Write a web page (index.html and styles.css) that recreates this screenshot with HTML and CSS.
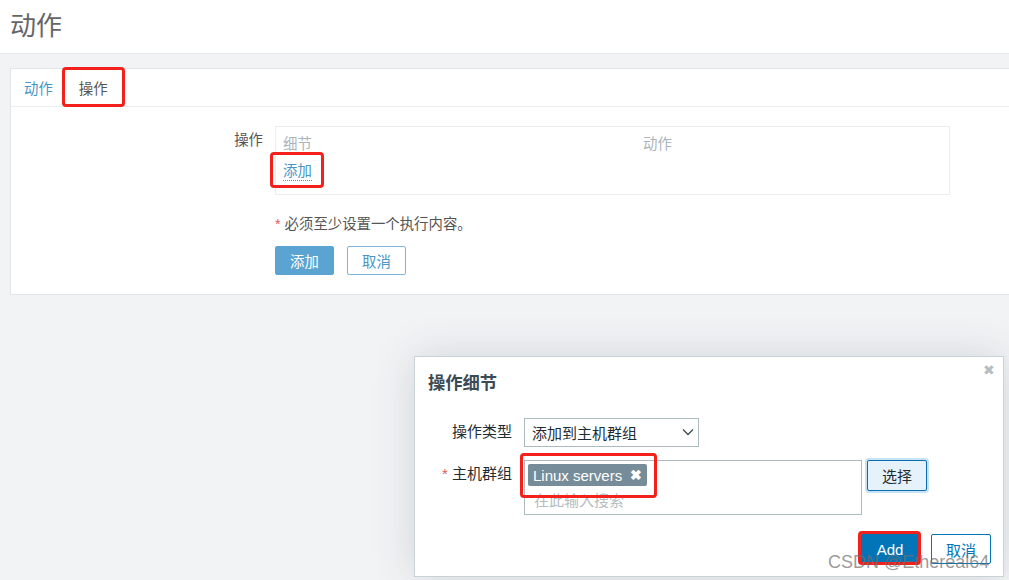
FILE: index.html
```html
<!DOCTYPE html>
<html lang="zh">
<head>
<meta charset="utf-8">
<title>动作</title>
<link rel="stylesheet" href="styles.css">
</head>
<body>
<header class="page-header">
  <h1 class="page-title">动作</h1>
</header>
<main class="page-main">
  <section class="card">
    <nav class="tabs">
      <a class="tab">动作</a>
      <a class="tab tab-active hl hl-tab">操作</a>
    </nav>
    <div class="form">
      <div class="form-row">
        <div class="form-label">操作</div>
        <div class="form-field">
          <div class="ops-table">
            <div class="ops-head">
              <span class="col-detail">细节</span>
              <span class="col-action">动作</span>
            </div>
            <div class="ops-body">
              <a class="link-add hl hl-link">添加</a>
            </div>
          </div>
        </div>
      </div>
      <div class="form-row">
        <div class="form-label"></div>
        <div class="form-field">
          <p class="note"><span class="req">*</span> 必须至少设置一个执行内容。</p>
          <div class="btns">
            <button class="btn btn-primary-muted">添加</button>
            <button class="btn btn-outline-muted">取消</button>
          </div>
        </div>
      </div>
    </div>
  </section>
</main>

<div class="dialog">
  <div class="dialog-head">
    <h2 class="dialog-title">操作细节</h2>
    <span class="dialog-close">&#10006;</span>
  </div>
  <div class="dialog-body">
    <div class="d-row">
      <div class="d-label">操作类型</div>
      <div class="d-field">
        <div class="select">
          <span>添加到主机群组</span>
          <svg class="chev" width="12" height="8" viewBox="0 0 12 8"><path d="M1 1.5 L6 6.5 L11 1.5" fill="none" stroke="#3b4b55" stroke-width="1.3"/></svg>
        </div>
      </div>
    </div>
    <div class="d-row">
      <div class="d-label"><span class="req">*</span> 主机群组</div>
      <div class="d-field d-field-ms">
        <div class="multiselect">
          <div class="tag-wrap hl hl-tag">
            <span class="tag">Linux servers <span class="tag-x">&#10006;</span></span>
          </div>
          <div class="ms-placeholder">在此输入搜索</div>
        </div>
        <button class="btn-select">选择</button>
      </div>
    </div>
  </div>
  <div class="dialog-foot">
    <button class="dbtn dbtn-primary hl hl-add">Add</button>
    <button class="dbtn dbtn-outline">取消</button>
  </div>
  <div class="watermark">CSDN @Ethereal64</div>
</div>
</body>
</html>
```
FILE: styles.css
```css
* { box-sizing: border-box; }
html, body { margin: 0; padding: 0; }
body {
  background: #f2f3f5;
  font-family: "Liberation Sans", "Noto Sans CJK SC", sans-serif;
  font-size: 14.4px;
  color: #4a4a4a;
  width: 1009px;
  height: 580px;
  overflow: hidden;
  position: relative;
}
button { font-family: inherit; }

.page-header {
  height: 54px;
  background: #fff;
  border-bottom: 1px solid #e6e8ea;
  display: flex;
  align-items: center;
  padding-left: 10px;
}
.page-title {
  margin: 0;
  font-size: 26px;
  font-weight: normal;
  color: #666;
  line-height: 1;
  transform: translateY(-1px);
}

.page-main { padding: 14px 0 0 10px; }
.card {
  width: 1010px;
  background: #fff;
  border: 1px solid #e1e5e8;
  padding-bottom: 19px;
}

.tabs {
  display: flex;
  height: 38px;
  border-bottom: 1px solid #ebeef0;
  padding-left: 13px;
}
.tab {
  display: flex;
  align-items: center;
  color: #4796c4;
  position: relative;
}
.tab-active {
  color: #555;
  margin-left: 25px;
  padding-left: 1px;
}

.hl { position: relative; }
.hl::after {
  content: "";
  position: absolute;
  border: 3px solid #f4201c;
  border-radius: 4px;
  pointer-events: none;
}
.hl-tab::after { left: -16px; right: -17px; top: -2px; bottom: -1px; }
.hl-link::after { left: -13px; right: -12px; top: -10px; bottom: -8px; }
.hl-tag::after { left: -8px; right: -10px; top: -11px; bottom: -12px; }
.hl-add::after { left: -3px; right: -2px; top: -4px; bottom: -2px; }

.form { padding-top: 19px; }
.form-row { display: flex; }
.form-label {
  width: 264px;
  flex: none;
  text-align: right;
  padding-right: 12px;
  padding-top: 5px;
  line-height: 18px;
  color: #555;
}
.form-field { flex: none; }

.ops-table {
  width: 675px;
  height: 69px;
  border: 1px solid #ebeef0;
}
.ops-head {
  display: flex;
  padding: 8px 0 0 7px;
  color: #aab4ba;
  height: 35px;
  line-height: 18px;
}
.col-detail { width: 360px; }
.ops-body { padding-left: 7px; line-height: 18px; }
.link-add {
  color: #4796c4;
  border-bottom: 1px dotted #4796c4;
  display: inline-block;
  line-height: 18px;
}

.note {
  margin: 20px 0 0;
  color: #555;
  line-height: 18px;
}
.req { color: #e05a5a; }
.btns { display: flex; gap: 13px; margin-top: 13px; }
.btn {
  height: 29px;
  font-size: 14.4px;
  padding: 0;
  border-radius: 2px;
  cursor: pointer;
}
.btn-primary-muted {
  width: 59px;
  background: #5ba4d1;
  color: #fff;
  border: 1px solid #5ba4d1;
}
.btn-outline-muted {
  width: 59px;
  background: #fff;
  color: #4796c4;
  border: 1px solid #7eb7d9;
}

/* dialog */
.dialog {
  position: absolute;
  left: 414px;
  top: 356px;
  width: 590px;
  height: 221px;
  background: #fff;
  border: 1px solid #c8d2d7;
  box-shadow: 0 0 40px rgba(40, 60, 70, 0.16);
  display: flex;
  flex-direction: column;
}
.dialog-head {
  display: flex;
  justify-content: space-between;
  align-items: flex-start;
  padding: 15px 8px 0 13px;
  height: 61px;
}
.dialog-title {
  margin: 0;
  font-size: 17.3px;
  font-weight: bold;
  color: #3a4b55;
  line-height: 22px;
}
.dialog-close {
  color: #b3bdc2;
  font-size: 14px;
  line-height: 1;
  margin-top: -9px;
}
.dialog-body { padding: 0; font-size: 15px; color: #1f2c33; }
.d-row { display: flex; margin-bottom: 13px; }
.d-label {
  width: 109px;
  flex: none;
  text-align: right;
  padding-right: 12px;
  padding-top: 4px;
  line-height: 20px;
}
.d-field { display: flex; gap: 5px; }
.select {
  width: 175px;
  height: 29px;
  border: 1px solid #acbbc2;
  display: flex;
  align-items: center;
  justify-content: space-between;
  padding: 0 4px 0 7px;
  background: #fff;
}
.chev { margin-top: -1px; }
.multiselect {
  width: 338px;
  height: 55px;
  border: 1px solid #acbbc2;
  padding: 3px 0 0 3px;
}
.tag-wrap { display: inline-block; }
.tag {
  display: inline-flex;
  align-items: center;
  height: 22px;
  background: #768d99;
  color: #fff;
  border-radius: 2px;
  padding: 0 5px 0 5px;
  font-size: 15px;
  gap: 8px;
}
.tag-x { font-size: 14px; font-weight: bold; line-height: 1; }
.ms-placeholder {
  color: #b5bdc1;
  padding-left: 6px;
  line-height: 20px;
  margin-top: 5px;
}
.btn-select {
  width: 60px;
  height: 31px;
  background: #e6f2fb;
  border: 1px solid #0a6eb0;
  border-radius: 2px;
  color: #1f2c33;
  font-size: 15px;
  box-shadow: 0 0 0 2px #c7e2f5;
  padding: 0;
}
.dialog-foot {
  display: flex;
  justify-content: flex-end;
  gap: 11px;
  padding: 6px 12px 0 0;
}
.dbtn {
  height: 30px;
  width: 60px;
  font-size: 15px;
  padding: 0;
  border-radius: 2px;
}
.dbtn-primary { background: #0275b8; color: #fff; border: 1px solid #0275b8; }
.dbtn-outline { background: #fff; color: #0275b8; border: 1px solid #0275b8; }

.watermark {
  position: absolute;
  left: 413px;
  top: 195px;
  font-size: 18px;
  font-family: "Liberation Sans", sans-serif;
  color: rgba(110, 110, 110, 0.7);
  white-space: nowrap;
}
```
